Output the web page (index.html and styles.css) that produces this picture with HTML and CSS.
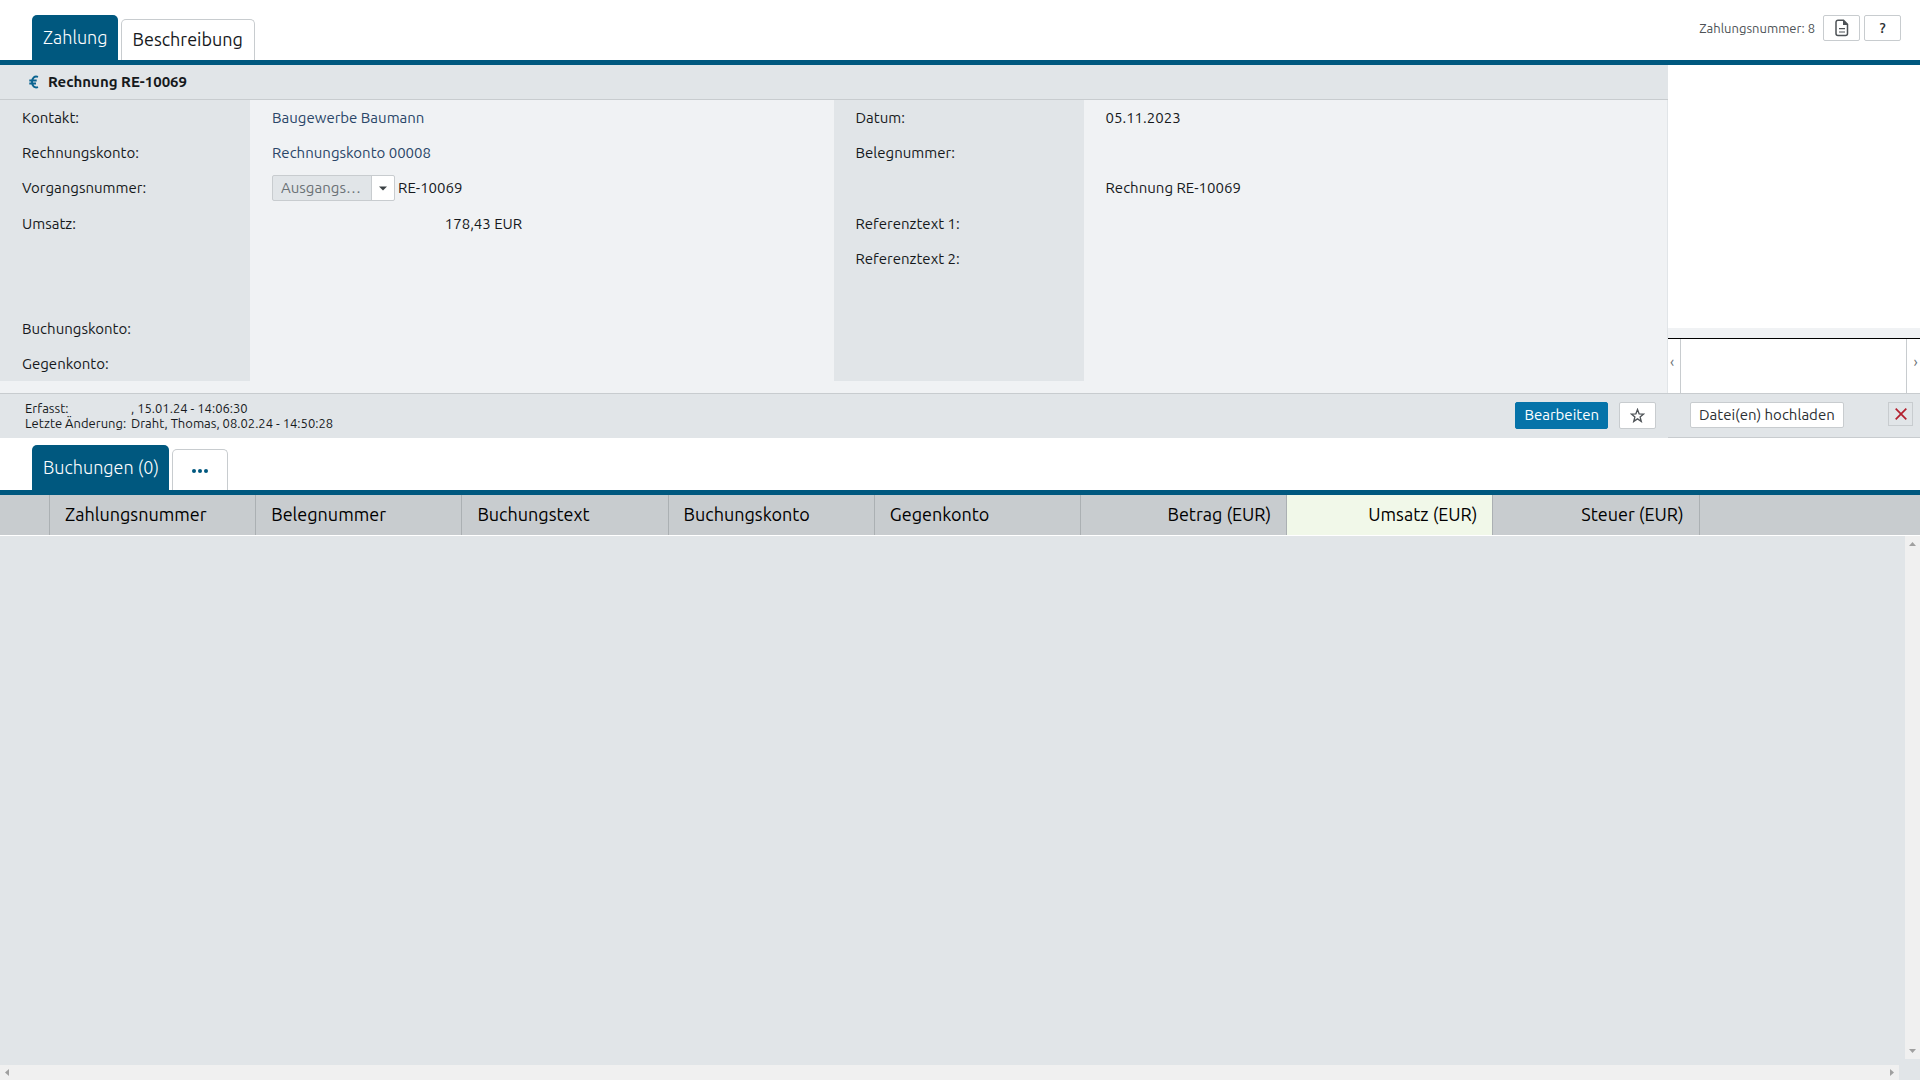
FILE: index.html
```
<!DOCTYPE html>
<html lang="de">
<head>
    <meta charset="UTF-8">
    <meta name="viewport" content="width=device-width, initial-scale=1.0">
    <title>Zahlung 8</title>
    <link rel="stylesheet" href="styles.css">
</head>
<body>
    <!-- Top Tabs -->
    <header class="tab-bar">
        <nav class="tabs">
            <a href="#zahlung" class="tab active">Zahlung</a>
            <a href="#beschreibung" class="tab">Beschreibung</a>
        </nav>
        <div class="tools">
            <span class="record-number">Zahlungsnummer: 8</span>
            <button type="button" class="btn icon-btn" aria-label="Dokument">
                <svg width="14" height="18" viewBox="0 0 14 18">
                    <path d="M3 1.2h5.5l4 4V14.600a2 2 0 0 1-2 2H3a2 2 0 0 1-2-2V3.200a2 2 0 0 1 2-2z" fill="none" stroke="#4d5256" stroke-width="1.500"/>
                    <path d="M8 1v5h5z" fill="#4d5256"/>
                    <path d="M4 9.700h6M4 13h6" stroke="#4d5256" stroke-width="1.200"/>
                </svg>
            </button>
            <button type="button" class="btn icon-btn help">?</button>
        </div>
    </header>

    <!-- Payment Details -->
    <main class="record" id="zahlung">
        <section class="details">
            <h1 class="record-title">
                <svg width="10" height="14" viewBox="0 0 10 14">
                    <path d="M9 1.900C5.500.600 3 2.900 3 7s2.500 6.400 6 5.100M.3 5.500h7.400M.3 8.500h6.700" fill="none" stroke="#0a6390" stroke-width="1.900"/>
                </svg>
                Rechnung RE-10069
            </h1>
            <div class="form">
                <dl class="fields">
                    <dt>Kontakt:</dt>
                    <dd><a href="#kontakt">Baugewerbe Baumann</a></dd>
                    <dt>Rechnungskonto:</dt>
                    <dd><a href="#konto">Rechnungskonto 00008</a></dd>
                    <dt><label for="vorgang">Vorgangsnummer:</label></dt>
                    <dd>
                        <span class="select-box">
                            <select id="vorgang">
                                <option>Ausgangs…</option>
                            </select>
                            <svg class="caret" width="8" height="5" viewBox="0 0 8 5"><path d="M0 .5h8L4 4.500z" fill="#3b4044"/></svg>
                        </span>
                        RE-10069
                    </dd>
                    <dt>Umsatz:</dt>
                    <dd><span class="amount">178,43 EUR</span></dd>
                    <dt></dt>
                    <dd></dd>
                    <dt></dt>
                    <dd></dd>
                    <dt>Buchungskonto:</dt>
                    <dd></dd>
                    <dt>Gegenkonto:</dt>
                    <dd></dd>
                </dl>
                <dl class="fields">
                    <dt>Datum:</dt>
                    <dd>05.11.2023</dd>
                    <dt>Belegnummer:</dt>
                    <dd></dd>
                    <dt></dt>
                    <dd>Rechnung RE-10069</dd>
                    <dt>Referenztext 1:</dt>
                    <dd></dd>
                    <dt>Referenztext 2:</dt>
                    <dd></dd>
                    <dt></dt>
                    <dd></dd>
                    <dt></dt>
                    <dd></dd>
                    <dt></dt>
                    <dd></dd>
                </dl>
            </div>
            <div class="action-bar">
                <div class="history">
                    <span>Erfasst:</span>
                    <span>, 15.01.24 - 14:06:30</span>
                    <span>Letzte Änderung:</span>
                    <span>Draht, Thomas, 08.02.24 - 14:50:28</span>
                </div>
                <button type="button" class="btn primary">Bearbeiten</button>
                <button type="button" class="btn icon-btn star" aria-label="Favorit">
                    <svg width="15" height="15" viewBox="0 0 15 15">
                        <path d="M7.500 1.500l1.600 4.300 4.600.2-3.600 2.900 1.200 4.500-3.800-2.500-3.800 2.500 1.200-4.500L1.300 6l4.600-.2z" fill="none" stroke="#4d5256" stroke-width="1.300"/>
                    </svg>
                </button>
            </div>
        </section>

        <!-- File Preview -->
        <aside class="files">
            <div class="preview"></div>
            <div class="thumbs">
                <button type="button" class="thumb-nav" aria-label="Zurück">‹</button>
                <div class="thumb-list"></div>
                <button type="button" class="thumb-nav next" aria-label="Weiter">›</button>
            </div>
            <div class="file-actions">
                <button type="button" class="btn">Datei(en) hochladen</button>
                <button type="button" class="delete" aria-label="Löschen">
                    <svg width="12" height="12" viewBox="0 0 12 12"><path d="M.7.700l10.600 10.600M11.300.700L.700 11.300" stroke="#b3202e" stroke-width="1.700"/></svg>
                </button>
            </div>
        </aside>
    </main>

    <!-- Bookings -->
    <div class="tab-bar">
        <nav class="tabs">
            <a href="#buchungen" class="tab active">Buchungen (0)</a>
            <a href="#mehr" class="tab more" aria-label="Mehr">
                <svg width="16" height="4" viewBox="0 0 16 4"><g fill="#00587f"><circle cx="2" cy="2" r="2"/><circle cx="8" cy="2" r="2"/><circle cx="14" cy="2" r="2"/></g></svg>
            </a>
        </nav>
    </div>
    <section class="bookings" id="buchungen">
        <table>
            <thead>
                <tr>
                    <th class="select-col"></th>
                    <th>Zahlungsnummer</th>
                    <th>Belegnummer</th>
                    <th>Buchungstext</th>
                    <th>Buchungskonto</th>
                    <th>Gegenkonto</th>
                    <th class="num">Betrag (EUR)</th>
                    <th class="num sorted">Umsatz (EUR)</th>
                    <th class="num">Steuer (EUR)</th>
                    <th class="rest"></th>
                </tr>
            </thead>
        </table>
        <div class="rows">
            <div class="scroll-y">
                <svg width="7" height="4" viewBox="0 0 7 4"><path d="M0 4h7L3.500 0z"/></svg>
                <svg width="7" height="4" viewBox="0 0 7 4"><path d="M0 0h7L3.500 4z"/></svg>
            </div>
        </div>
        <div class="scroll-x">
            <svg width="4" height="7" viewBox="0 0 4 7"><path d="M4 0v7L0 3.500z"/></svg>
            <svg width="4" height="7" viewBox="0 0 4 7"><path d="M0 0v7l4-3.500z"/></svg>
        </div>
    </section>
</body>
</html>
```
FILE: styles.css
```
/* General Reset */
* {
    margin: 0;
    padding: 0;
    box-sizing: border-box;
}

body {
    display: flex;
    flex-direction: column;
    min-height: 100vh;
    font-family: Ubuntu, 'Noto Sans', sans-serif;
    font-size: 15px;
    line-height: 20px;
    color: #16191c;
    background: #fff;
}

a {
    color: #2a4668;
    text-decoration: none;
}

svg {
    display: block;
}

button,
select {
    font: inherit;
}

/* Tabs */
.tab-bar {
    display: flex;
    justify-content: space-between;
    align-items: flex-start;
    padding: 15px 19px 0 32px;
    border-bottom: 5px solid #00587f;
}

main + .tab-bar {
    padding-top: 7px;
}

.tabs {
    display: flex;
    align-items: flex-end;
    gap: 3px;
}

.tab {
    height: 41px;
    padding: 0 11px;
    border: 1px solid #c8cccf;
    border-bottom: 0;
    border-radius: 5px 5px 0 0;
    font-size: 18px;
    line-height: 39px;
    color: #16191c;
}

.tab.active {
    height: 45px;
    padding: 0 10px 0 11px;
    border: 0;
    line-height: 44px;
    font-weight: 300;
    color: #fff;
    background: #00587f;
}

.tab.more {
    display: flex;
    align-items: center;
    padding: 2px 19px 0;
}

.tools {
    display: flex;
    align-items: center;
    gap: 4px;
}

.record-number {
    margin-right: 4px;
    font-size: 13px;
    color: #4d5256;
}

/* Buttons */
.btn {
    display: flex;
    justify-content: center;
    align-items: center;
    height: 26px;
    padding: 0 8px;
    border: 1px solid #c8cccf;
    border-radius: 2px;
    color: #2c3033;
    background: #fff;
    cursor: pointer;
}

.btn.icon-btn {
    width: 37px;
    padding: 0;
}

.btn.help {
    font-weight: 500;
}

.btn.primary,
.btn.star {
    height: 27px;
}

.btn.primary {
    border-color: #0573a9;
    color: #fff;
    background: #0573a9;
}

/* Payment Record */
.record {
    display: flex;
}

.details {
    flex: 1;
    display: flex;
    flex-direction: column;
}

.record-title {
    display: flex;
    align-items: center;
    gap: 9px;
    height: 35px;
    padding-left: 29px;
    border-bottom: 1px solid #c8cccf;
    font-size: 15px;
    background: #e1e5e8;
}

.form {
    display: flex;
    padding-bottom: 12px;
    border-right: 1px solid #e1e5e8;
    background: #f0f2f4;
}

.fields {
    flex: 1;
    display: grid;
    grid-template-columns: 30% 70%;
    grid-template-rows: 35px 35px 36px;
    grid-auto-rows: 35px;
}

.fields dt,
.fields dd {
    display: flex;
    align-items: center;
    padding: 0 22px;
}

.fields dt {
    background: #e1e5e8;
}

.amount {
    width: 250px;
    text-align: right;
}

.select-box {
    position: relative;
    width: 123px;
    margin-right: 3px;
}

.select-box select {
    display: block;
    width: 100%;
    height: 26px;
    padding: 0 24px 0 8px;
    appearance: none;
    border: 1px solid #c8cccf;
    border-radius: 2px;
    color: #6b7276;
    background: linear-gradient(to left, #fff 22px, #c8cccf 22px, #c8cccf 23px, #e1e5e8 23px);
}

.caret {
    position: absolute;
    top: 11px;
    right: 8px;
    pointer-events: none;
}

.action-bar {
    display: flex;
    align-items: center;
    gap: 11px;
    height: 45px;
    padding: 0 12px 2px 25px;
    border-top: 1px solid #c8cccf;
    background: #e1e5e8;
}

.history {
    flex: 1;
    display: grid;
    grid-template-columns: 106px 1fr;
    padding-top: 2px;
    font-size: 13px;
    line-height: 15px;
}

/* File Preview */
.files {
    display: flex;
    flex-direction: column;
    width: 252px;
}

.preview {
    flex: 1;
    border-bottom: 10px solid #f0f2f4;
}

.thumbs {
    display: flex;
    height: 55px;
    border-top: 1px solid #000;
}

.thumb-nav {
    width: 13px;
    padding-bottom: 8px;
    padding-right: 4px;
    border: 0;
    border-right: 1px solid #c8cccf;
    color: #6b7276;
    background: #fff;
}

.thumb-nav.next {
    width: 14px;
    padding: 0 0 8px 4px;
    border-right: 0;
    border-left: 1px solid #c8cccf;
}

.thumb-list {
    flex: 1;
}

.file-actions {
    display: flex;
    justify-content: space-between;
    align-items: flex-start;
    height: 45px;
    padding: 8px 7px 0 22px;
    border-top: 1px solid #c8cccf;
    border-bottom: 1px solid #c8cccf;
    background: #e1e5e8;
}

.delete {
    display: flex;
    justify-content: center;
    align-items: center;
    width: 25px;
    height: 24px;
    border: 1px solid #c8cccf;
    background: #e1e5e8;
}

/* Bookings Table */
.bookings {
    flex: 1;
    display: flex;
    flex-direction: column;
    background: #e1e5e8;
}

table {
    width: 100%;
    table-layout: fixed;
    border-collapse: separate;
    border-spacing: 0;
    border-bottom: 1px solid #fff;
}

th {
    width: 10.74%;
    height: 40px;
    padding: 0 15px 2px;
    border-right: 1px solid #abb0b3;
    font-size: 18px;
    font-weight: 400;
    text-align: left;
    color: #000;
    background: #c8cccf;
}

th.select-col {
    width: 50px;
}

th.num {
    text-align: right;
}

th.sorted {
    background: #f1f8e9;
}

th.rest {
    width: auto;
    border-right: 0;
}

.rows {
    flex: 1;
    display: flex;
    justify-content: flex-end;
    padding-bottom: 6px;
}

.scroll-y,
.scroll-x {
    display: flex;
    justify-content: space-between;
    align-items: center;
    background: #f0f0f0;
    fill: #a0a0a0;
}

.scroll-y {
    flex-direction: column;
    width: 15px;
    padding: 6px 0;
}

.scroll-x {
    height: 15px;
    margin-right: 21px;
    padding: 0 5px;
}
```
